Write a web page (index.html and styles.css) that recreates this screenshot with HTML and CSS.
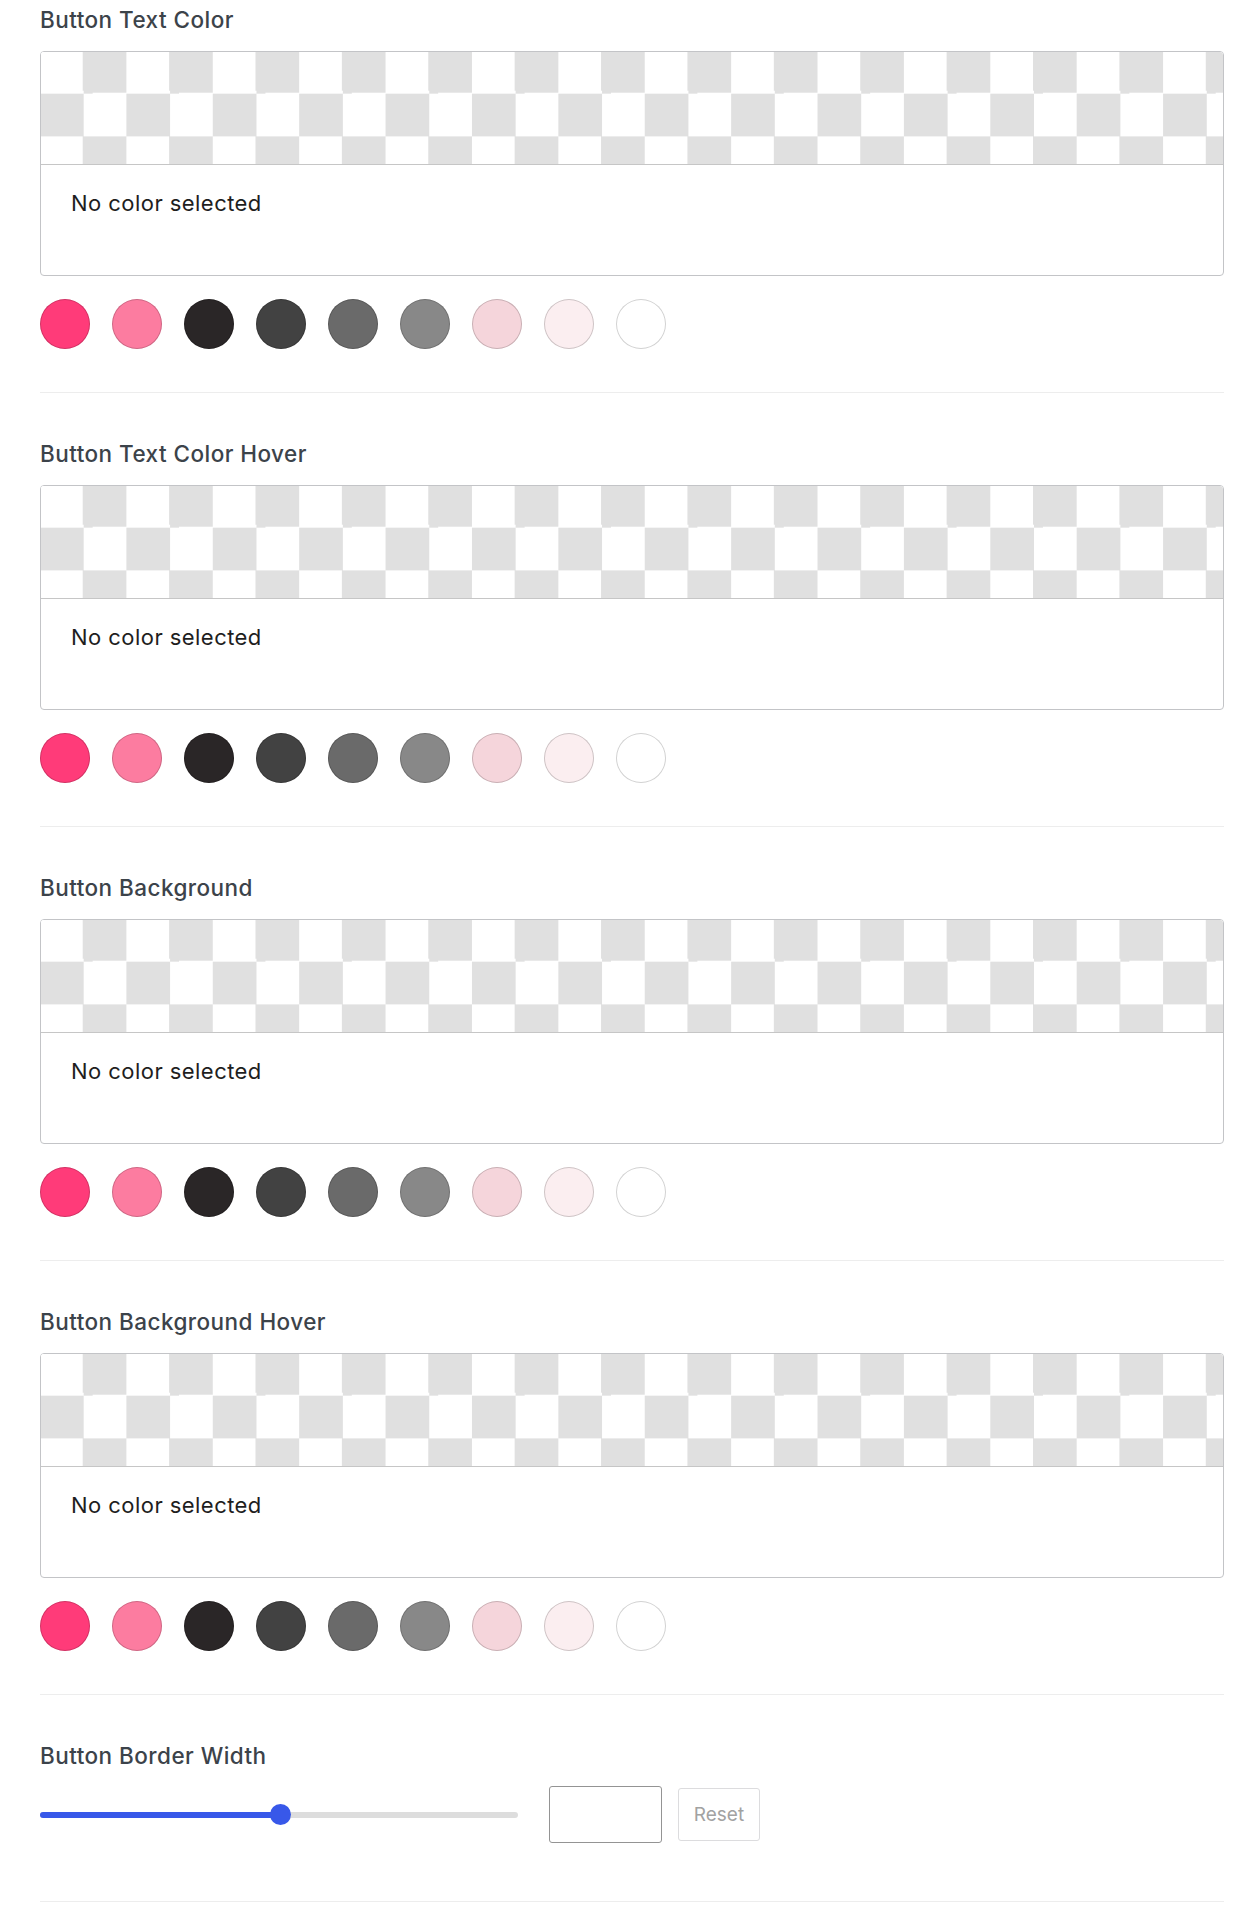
FILE: index.html
```html
<!DOCTYPE html>
<html lang="en">
<head>
<meta charset="utf-8">
<title>Button settings</title>
<link rel="stylesheet" href="styles.css">
</head>
<body>
<div class="settings">
  <section class="field">
    <div class="field-label">Button Text Color</div>
    <div class="color-box">
      <div class="checker"></div>
      <div class="color-value">No color selected</div>
    </div>
    <div class="swatches">
      <span class="swatch s1"></span><span class="swatch s2"></span><span class="swatch s3"></span><span class="swatch s4"></span><span class="swatch s5"></span><span class="swatch s6"></span><span class="swatch s7"></span><span class="swatch s8"></span><span class="swatch s9"></span>
    </div>
  </section>
  <section class="field">
    <div class="field-label">Button Text Color Hover</div>
    <div class="color-box">
      <div class="checker"></div>
      <div class="color-value">No color selected</div>
    </div>
    <div class="swatches">
      <span class="swatch s1"></span><span class="swatch s2"></span><span class="swatch s3"></span><span class="swatch s4"></span><span class="swatch s5"></span><span class="swatch s6"></span><span class="swatch s7"></span><span class="swatch s8"></span><span class="swatch s9"></span>
    </div>
  </section>
  <section class="field">
    <div class="field-label">Button Background</div>
    <div class="color-box">
      <div class="checker"></div>
      <div class="color-value">No color selected</div>
    </div>
    <div class="swatches">
      <span class="swatch s1"></span><span class="swatch s2"></span><span class="swatch s3"></span><span class="swatch s4"></span><span class="swatch s5"></span><span class="swatch s6"></span><span class="swatch s7"></span><span class="swatch s8"></span><span class="swatch s9"></span>
    </div>
  </section>
  <section class="field">
    <div class="field-label">Button Background Hover</div>
    <div class="color-box">
      <div class="checker"></div>
      <div class="color-value">No color selected</div>
    </div>
    <div class="swatches">
      <span class="swatch s1"></span><span class="swatch s2"></span><span class="swatch s3"></span><span class="swatch s4"></span><span class="swatch s5"></span><span class="swatch s6"></span><span class="swatch s7"></span><span class="swatch s8"></span><span class="swatch s9"></span>
    </div>
  </section>
  <section class="field field-range">
    <div class="field-label">Button Border Width</div>
    <div class="range-row">
      <div class="slider">
        <div class="slider-track"></div>
        <div class="slider-fill" style="width: 240px"></div>
        <div class="slider-thumb" style="left: 240px"></div>
      </div>
      <div class="number-input"></div>
      <button class="reset-btn" type="button">Reset</button>
    </div>
  </section>
</div>
</body>
</html>
```

FILE: styles.css
```css
* { box-sizing: border-box; }

html, body {
  margin: 0;
  padding: 0;
  background: #ffffff;
}

body {
  font-family: Inter, "Noto Sans", "Liberation Sans", sans-serif;
}

.settings {
  padding: 4px 22px 0 40px;
  width: 1246px;
}

.field {
  border-bottom: 1px solid #ededed;
  padding-bottom: 43px;
  margin-bottom: 45px;
}

.field-label {
  font-size: 22.5px;
  font-weight: 500;
  letter-spacing: 0.45px;
  line-height: 32px;
  color: #3c434a;
  margin-bottom: 15px;
}

.color-box {
  height: 225px;
  border: 1px solid #c3c4c7;
  border-radius: 4px;
  overflow: hidden;
  display: flex;
  flex-direction: column;
}

.checker {
  height: 113px;
  flex: none;
  border-bottom: 1px solid #c6c6c6;
  background-color: #ffffff;
  background-image: repeating-conic-gradient(#e0e0e0 0 25%, #ffffff 0 50%);
  background-size: 86.4px 86.4px;
  background-position: -1px -2px;
}

.color-value {
  flex: 1;
  padding: 24px 30px;
  font-size: 22px;
  letter-spacing: 0.45px;
  line-height: 28px;
  color: #1e1e1e;
}

.swatches {
  display: flex;
  gap: 22px;
  margin-top: 23px;
}

.swatch {
  width: 50px;
  height: 50px;
  border-radius: 50%;
  box-shadow: inset 0 0 0 1px rgba(0, 0, 0, 0.18);
}

.s1 { background: #ff3b79; }
.s2 { background: #fc7ca0; }
.s3 { background: #2a2627; }
.s4 { background: #424242; }
.s5 { background: #6a6a6a; }
.s6 { background: #888888; }
.s7 { background: #f5d5db; }
.s8 { background: #fbeef0; }
.s9 { background: #ffffff; }

.field-range {
  padding-bottom: 58px;
}

.field-range .field-label {
  margin-bottom: 14px;
}

.range-row {
  display: flex;
  align-items: center;
  height: 57px;
}

.slider {
  position: relative;
  width: 478px;
  height: 22px;
  margin-right: 31px;
}

.slider-track {
  position: absolute;
  left: 0;
  right: 0;
  top: 8px;
  height: 6px;
  border-radius: 3px;
  background: #dddddd;
}

.slider-fill {
  position: absolute;
  left: 0;
  top: 8px;
  height: 6px;
  border-radius: 3px;
  background: #3858e9;
}

.slider-thumb {
  position: absolute;
  top: 0;
  width: 21px;
  height: 21px;
  margin-left: -10px;
  border-radius: 50%;
  background: #3858e9;
}

.number-input {
  width: 113px;
  height: 57px;
  border: 1px solid #949494;
  border-radius: 3px;
  background: #ffffff;
  margin-right: 16px;
}

.reset-btn {
  width: 82px;
  height: 53px;
  border: 1px solid #dcdcde;
  border-radius: 3px;
  background: #ffffff;
  color: #a2a2a2;
  font-family: Inter, "Noto Sans", "Liberation Sans", sans-serif;
  font-size: 19px;
  padding: 0;
}
```
